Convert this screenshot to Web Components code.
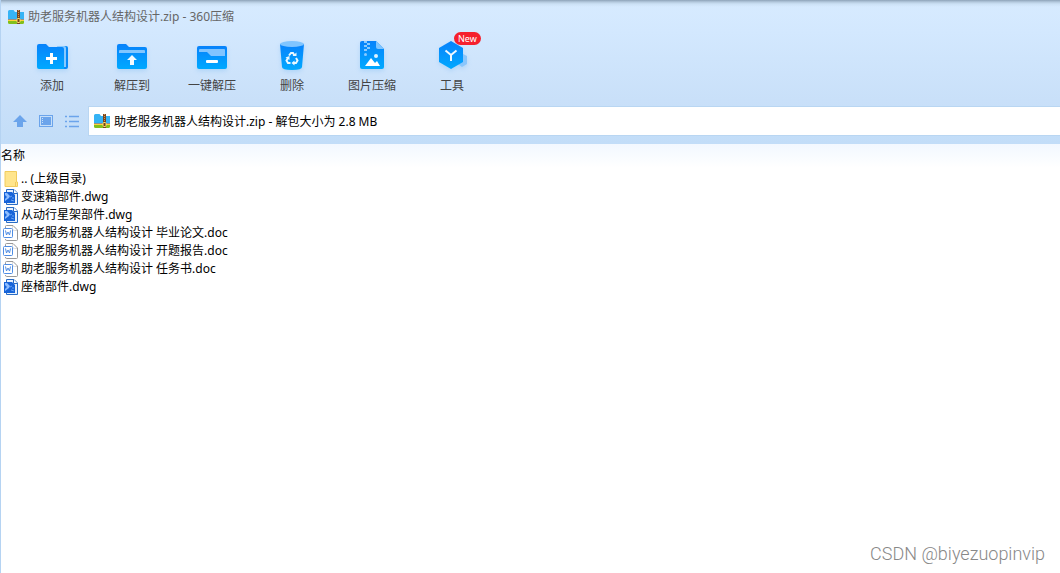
<!DOCTYPE html>
<html lang="zh-CN">
<head>
<meta charset="utf-8">
<title>助老服务机器人结构设计.zip - 360压缩</title>
<style>
html,body{margin:0;min-height:100%}
body{font:12px/18px "Noto Sans","Noto Sans CJK SC",sans-serif;color:#000;background:#fff}
</style>
</head>
<body>
<zip-window></zip-window>
<script>
const ICONS = {
  archive: [16, 16, `<path d="M0 2.500Q0 1 1.500 1H5.500L7 3H16V11H0Z" fill="#35b3f5"/><path d="M0 10.500H16V12.500H0Z" fill="#ff6b12"/><path d="M0 11.500H16" stroke="#ffd23a"/><path d="M0 12H16V13.500Q16 15 14.500 15H1.500Q0 15 0 13.500Z" fill="#82bf1c"/><rect x="9" y="1" width="3" height="14" fill="#774522"/><path d="M10.500 1V10" stroke="#d99542" stroke-dasharray="1 1"/><rect x="9" y="9.500" width="3" height="4" rx="1" fill="#714117" stroke="#ffe16a"/>`],
  add: [40, 34, `<path d="M29 6H34Q36 6 36 8V27Q36 29 34 29H28Z" fill="#0789f8"/><path d="M25 6H32Q34 6 34 8V27H29Z" fill="#87c9ff"/><path d="M5 6Q5 4 7 4H14L17 7H30Q32 7 32 9V29H7Q5 29 5 27Z" fill="url(#g)"/><path d="M19.500 13V24M14 18.500H25" stroke="#fff" stroke-width="3"/>`],
  extract: [40, 34, `<path d="M5 6Q5 4 7 4H14L17 7H33Q35 7 35 9V27Q35 29 33 29H7Q5 29 5 27Z" fill="url(#g)"/><path d="M7 13V11Q7 10 8 10H32Q33 10 33 11V13Z" fill="#82c6ff"/><path d="M20 15L25 20H22V25H18V20H15Z" fill="#f3fbff"/>`],
  quick: [40, 34, `<rect x="5" y="6" width="30" height="23" rx="2" fill="url(#g)"/><path d="M7 10Q7 9 8 9H32Q33 9 33 10V16H19L15 12H7Z" fill="#81c4ff"/><rect x="14" y="20" width="12" height="3" rx="1" fill="#fff"/>`],
  bin: [40, 34, `<path d="M8 4H32L30 27Q30 30 20 30T10 27Z" fill="url(#g)"/><ellipse cx="20" cy="4" rx="12" ry="3" fill="#80c5ff"/><g fill="none" stroke="#e8f8ff" stroke-width="2"><path d="M17 15.500L19 13H21L22.500 15.500M24 18L25.500 20.500L24 23H21.500M18.500 23H16L14.500 20.500L16 18"/></g><path d="M20.500 16H24.500V12.500ZM22.500 20.500V25.500L19.500 23ZM13.500 17.500L17.500 16V20Z" fill="#e8f8ff"/>`],
  image: [40, 34, `<path d="M8 3Q8 1 10 1H24L32 9V27Q32 29 30 29H10Q8 29 8 27Z" fill="url(#g)"/><path d="M24 1V7Q24 9 26 9H32Z" fill="#80c5ff"/><path d="M12 1H15V3H12ZM15 3H18V5H15ZM12 5H15V7H12ZM15 7H18V9H15ZM12 9H15V11H12Z" fill="#8acaff"/><circle cx="13.500" cy="14.500" r="1.500" fill="#8acaff"/><circle cx="24" cy="16" r="2" fill="#dff3ff"/><path d="M13 26L19 18L23 23L25 21L28 26Z" fill="#fff"/>`],
  tools: [40, 34, `<path d="M31 14L35 16V24L30 27L26 24V16Z" fill="#8ac6fc"/><path d="M19 1L31 8V22L19 29L7 22V8Z" fill="url(#g)"/><path d="M13.500 10.500L19 15L24.500 10.500M19 15V21" fill="none" stroke="#edf8ff" stroke-width="2"/>`],
  up: [14, 14, `<path d="M7 1L14 8H10V13H4V8H0Z" fill="#6ba4eb"/>`],
  panel: [14, 14, `<rect x=".5" y="1.500" width="13" height="11" fill="none" stroke="#6ba4eb"/><rect x="2" y="3" width="10" height="8" fill="#6ba4eb"/><path d="M3 4.500H4M3 6.500H4M3 8.500H4" stroke="#c8dffa"/>`],
  list: [14, 14, `<path d="M0 2.500H2M4 2.500H14M0 7.500H2M4 7.500H14M0 12.500H2M4 12.500H14" stroke="#6ba4eb" stroke-width="1.500"/>`],
  folder: [16, 18, `<path d="M3 1.500H14.500V12H15.500V16.500H3Z" fill="#ffe58c" stroke="#f1cc5d"/><path d="M13.500 16V12" stroke="#efca60"/>`],
  dwg: [16, 18, `<path d="M4.500 1.500H12L15.500 5V16.500H4.500Z" fill="#e6f1fd" stroke="#2a6cc4"/><path d="M11.500 1.500V5.500H15.500" fill="#fff" stroke="#2a6cc4"/><path d="M2 4H10L13 7V15H2Z" fill="#1764d9"/><path d="M3 5H5L8 8L7 10L3 13V11L5 9L3 7Z" fill="#8cbcff"/><path d="M8 9L10 8M9 12L12 13M10 10H12" fill="none" stroke="#69a5f4"/>`],
  doc: [16, 18, `<path d="M3.500 4V2.500Q3.500 1.500 4.500 1.500H11L15.500 6V15.500Q15.500 16.500 14.500 16.500H4.500Q3.500 16.500 3.500 15" fill="#fff" stroke="#999"/><path d="M10.500 2V4.500Q10.500 6.500 12.500 6.500H15" fill="none" stroke="#ddd"/><rect x="1.500" y="4.500" width="9" height="9" rx="1" fill="#fff" stroke="#4f8de4"/><path d="M3.500 6.500L4.500 11L6 8L7.500 11L8.500 6.500" fill="none" stroke="#4f8de4"/>`]
};

class UiIcon extends HTMLElement {
  connectedCallback() {
    const [w, h, art] = ICONS[this.getAttribute('name')];
    this.attachShadow({mode: 'open'}).innerHTML = `
      <style>:host{display:block;flex:none;width:${w}px;height:${h}px}svg{display:block;overflow:visible}</style>
      <svg aria-hidden="true" width="${w}" height="${h}" viewBox="0 0 ${w} ${h}"><defs><linearGradient id="g" x1="0" y1="0" x2="0" y2="1"><stop stop-color="#0882fb"/><stop offset="1" stop-color="#00a9ff"/></linearGradient></defs>${art}</svg>`;
  }
}
customElements.define('ui-icon', UiIcon);

class ToolButton extends HTMLElement {
  connectedCallback() {
    this.attachShadow({mode: 'open'}).innerHTML = `
      <style>
      :host{display:block;width:80px}
      button{position:relative;display:flex;flex-direction:column;align-items:center;gap:3px;width:100%;padding:0;border:0;background:none;font:inherit;color:#444;white-space:nowrap}
      ui-icon{filter:drop-shadow(0 2px 2px #5dacef44)}
      ::slotted([slot=badge]){position:absolute;left:42px;top:-8px;padding:0 4px;border-radius:8px;background:#f5202d;color:#fff;font-size:9px;line-height:13px}
      </style>
      <button type="button"><ui-icon name="${this.getAttribute('icon')}"></ui-icon><span><slot></slot></span><slot name="badge"></slot></button>`;
  }
}
customElements.define('tool-button', ToolButton);

class TitleBar extends HTMLElement {
  connectedCallback() {
    this.attachShadow({mode: 'open'}).innerHTML = `
      <style>:host{display:flex;align-items:center;gap:4px;height:32px;padding:2px 7px 0;box-sizing:border-box;color:#666;background:linear-gradient(#8ea3b8 0,#b4c9dd 2px,#cce1f5 4px,transparent 7px)}</style>
      <ui-icon name="archive"></ui-icon><span><slot></slot></span>`;
  }
}
customElements.define('title-bar', TitleBar);

class AddressBar extends HTMLElement {
  connectedCallback() {
    this.attachShadow({mode: 'open'}).innerHTML = `
      <style>
      :host{display:flex;align-items:center;padding:0 0 8px 11px}
      nav{display:flex;gap:10px;margin-right:8px}
      button{padding:0;border:0;background:none;width:16px;display:flex;justify-content:center}
      label{flex:1;display:flex;align-items:center;gap:4px;height:28px;padding-left:5px;background:#fff;border:solid #b9d6f2;border-width:1px 0 1px 1px}
      input{flex:1;min-width:0;padding:1px 0 0;border:0;outline:0;background:none;font:inherit;color:#000;height:18px}
      </style>
      <nav aria-label="导航">
        <button type="button" aria-label="上级"><ui-icon name="up"></ui-icon></button>
        <button type="button" aria-label="预览"><ui-icon name="panel"></ui-icon></button>
        <button type="button" aria-label="列表"><ui-icon name="list"></ui-icon></button>
      </nav>
      <label><ui-icon name="archive"></ui-icon><input type="text" aria-label="路径" value="${this.getAttribute('value')}"></label>`;
  }
}
customElements.define('address-bar', AddressBar);

class FileList extends HTMLElement {
  connectedCallback() {
    const files = [
      ['folder', '.. (上级目录)'], ['dwg', '变速箱部件.dwg'], ['dwg', '从动行星架部件.dwg'],
      ['doc', '助老服务机器人结构设计 毕业论文.doc'], ['doc', '助老服务机器人结构设计 开题报告.doc'],
      ['doc', '助老服务机器人结构设计 任务书.doc'], ['dwg', '座椅部件.dwg']
    ];
    this.attachShadow({mode: 'open'}).innerHTML = `
      <style>
      :host{display:block;background:linear-gradient(#f2f8ff,#fff 24px)}
      table{width:100%;border-collapse:collapse}
      th{padding:2px 0 5px;text-align:left;font-weight:400;height:19px}
      td{padding:0;height:18px}
      td div{display:flex;align-items:center;gap:3px;padding-left:1px}
      </style>
      <table><thead><tr><th scope="col">名称</th></tr></thead><tbody>
      ${files.map(([icon, name]) => `<tr><td><div><ui-icon name="${icon}"></ui-icon><span>${name}</span></div></td></tr>`).join('')}
      </tbody></table>`;
  }
}
customElements.define('file-list', FileList);

class ZipWindow extends HTMLElement {
  connectedCallback() {
    this.attachShadow({mode: 'open'}).innerHTML = `
      <style>
      :host{display:flex;flex-direction:column;min-height:100vh;box-sizing:border-box;border-left:1px solid #b5d3f2;position:relative}
      header{background:linear-gradient(#d7ebff,#d3e8fe 32px,#c9e0f9 100px,#c2ddf8)}
      .tools{display:flex;padding:8px 0 11px 11px}
      file-list{flex:1}
      .mark{position:absolute;right:15px;bottom:7px;font:300 18px/24px Roboto,"Liberation Sans",sans-serif;color:#888}
      </style>
      <header>
        <title-bar>助老服务机器人结构设计.zip - 360压缩</title-bar>
        <div class="tools" role="toolbar">
          <tool-button icon="add">添加</tool-button>
          <tool-button icon="extract">解压到</tool-button>
          <tool-button icon="quick">一键解压</tool-button>
          <tool-button icon="bin">删除</tool-button>
          <tool-button icon="image">图片压缩</tool-button>
          <tool-button icon="tools">工具<span slot="badge">New</span></tool-button>
        </div>
        <address-bar value="助老服务机器人结构设计.zip - 解包大小为 2.8 MB"></address-bar>
      </header>
      <file-list></file-list>
      <span class="mark">CSDN @biyezuopinvip</span>`;
  }
}
customElements.define('zip-window', ZipWindow);
</script>
</body>
</html>
